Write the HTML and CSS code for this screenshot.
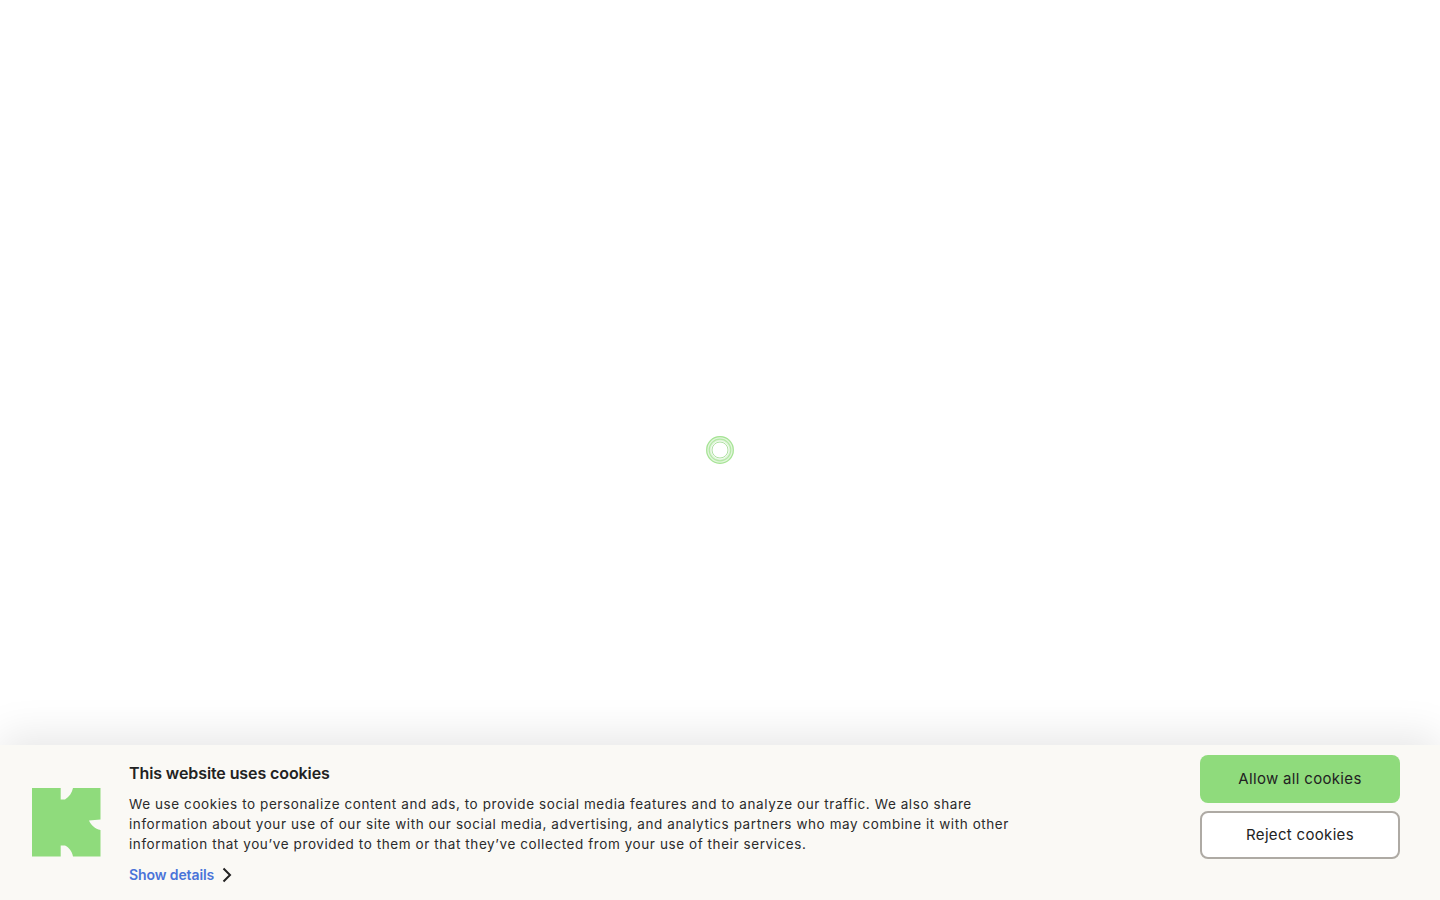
FILE: index.html
```html
<!DOCTYPE html>
<html lang="en">
<head>
  <meta charset="UTF-8">
  <title>Cookies</title>
  <link rel="stylesheet" href="styles.css">
</head>
<body>
  <main class="loading">
    <svg width="30" height="30" viewBox="0 0 30 30" fill="none">
      <circle cx="15" cy="15" r="11.500" stroke="#e2f6dc" stroke-width="5"/>
      <circle cx="15" cy="15" r="13.300" stroke="#a5e394" stroke-width="1.200"/>
      <circle cx="15" cy="15" r="10.800" stroke="#b4e8a6" stroke-width="1.200"/>
      <circle cx="15" cy="15" r="8" stroke="#a5dd96" stroke-width="0.900"/>
    </svg>
  </main>
  <section class="banner">
    <svg class="logo" width="69" height="69" viewBox="0 0 69 69">
      <path fill="#8fdb7c" d="M0 0H28.700V11.500H33C37 9 40 5 41 0H68.500V31.500L57 32.500C59 37 63 41 68.500 42V68.500H41C40 63 37 59.500 33 57.500H28.700V68.500H0Z"/>
    </svg>
    <div class="copy">
      <h2 class="title">This website uses cookies</h2>
      <p class="text">We use cookies to personalize content and ads, to provide social media features and to analyze our traffic. We also share information about your use of our site with our social media, advertising, and analytics partners who may combine it with other information that you’ve provided to them or that they’ve collected from your use of their services.</p>
      <a class="details" href="#">Show details
        <svg width="10" height="16" viewBox="0 0 10 16" fill="none"><path d="M1.500 1.500L8 8L1.500 14.500" stroke="#222" stroke-width="2"/></svg>
      </a>
    </div>
    <div class="actions">
      <button class="btn allow">Allow all cookies</button>
      <button class="btn reject">Reject cookies</button>
    </div>
  </section>
</body>
</html>
```

FILE: styles.css
```css
html, body {
  height: 100%;
  overflow: hidden;
}
body {
  margin: 0;
  display: flex;
  flex-direction: column;
  justify-content: flex-end;
  font-family: Inter, "Liberation Sans", sans-serif;
  background: #fff;
  color: #222;
}
.loading {
  position: absolute;
  inset: 0;
  display: flex;
  align-items: center;
  justify-content: center;
}
.banner {
  flex: 0 0 155px;
  box-sizing: border-box;
  display: flex;
  align-items: flex-start;
  padding: 10px 40px 0 32px;
  background: #faf9f5;
  box-shadow: 0 -8px 40px rgba(0, 0, 0, 0.1);
  position: relative;
}
.logo {
  flex: none;
  margin-top: 33px;
  margin-right: 28px;
}
.copy {
  flex: none;
  width: 890px;
}
.title {
  margin: 8px 0 0;
  font-size: 16px;
  line-height: 20px;
  font-weight: 600;
  letter-spacing: -0.1px;
}
.text {
  margin: 11px 0 0;
  font-size: 13.5px;
  line-height: 20px;
  letter-spacing: 0.58px;
  color: #2b2b2b;
}
.details {
  display: inline-flex;
  align-items: center;
  gap: 8px;
  margin-top: 11px;
  font-size: 14px;
  line-height: 20px;
  font-weight: 600;
  letter-spacing: -0.1px;
  color: #4a74d9;
  text-decoration: none;
}
.actions {
  margin-left: auto;
  display: flex;
  flex-direction: column;
  gap: 8px;
}
.btn {
  width: 200px;
  height: 48px;
  padding: 0 0 2px;
  border-radius: 8px;
  font-family: inherit;
  font-size: 15px;
  letter-spacing: 0.32px;
  color: #222;
  cursor: pointer;
}
.allow {
  background: #8fdb7c;
  border: 0;
}
.reject {
  background: #fff;
  border: 2px solid #aeaaa4;
}
```
